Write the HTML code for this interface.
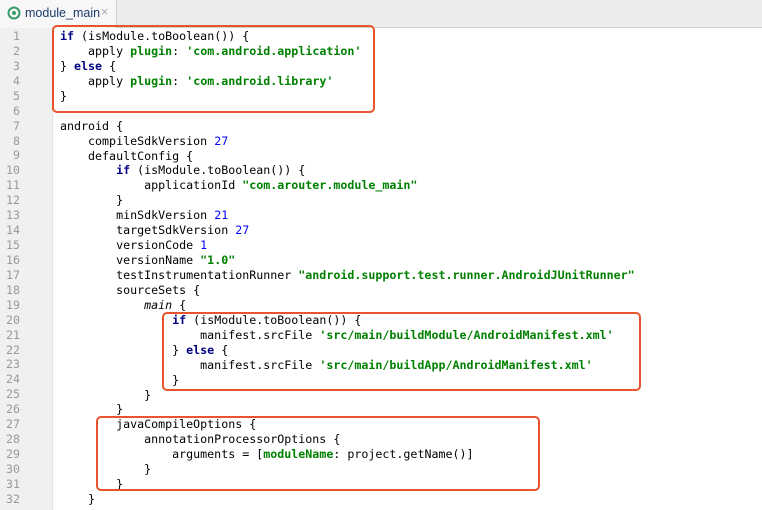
<!DOCTYPE html>
<html><head><style>
body{margin:0;width:762px;height:510px;background:#fff;overflow:hidden;position:relative;font-family:"DejaVu Sans Mono","Liberation Mono",monospace;}
#tabbar{position:absolute;left:0;top:0;width:762px;height:27px;background:#ececec;border-bottom:1px solid #d0d0d0;}
#tab{position:absolute;left:0;top:0;width:116px;height:28px;background:#f7f7f7;border-right:1px solid #ccc;font-family:"Liberation Sans",sans-serif;font-size:12.5px;color:#1a3a6a;}
#gutter{position:absolute;left:0;top:28px;width:52px;height:482px;background:#f0f0f0;border-right:1px solid #e2e2e2;}
.ln{position:absolute;left:0;width:20px;text-align:right;font-size:11.6px;color:#999;line-height:15px;}
.code{position:absolute;left:60px;font-size:11.65px;line-height:14.93px;white-space:pre;color:#000;}
.k{color:#000080;font-weight:bold}
.s{color:#008000;font-weight:bold}
.n{color:#0000ff}
.box{position:absolute;border:2.5px solid #e8542e;border-radius:5px;}
</style></head><body>
<div id="tabbar"><div id="tab">
<svg style="position:absolute;left:7px;top:6px" width="14" height="14"><circle cx="7" cy="7" r="5.5" fill="none" stroke="#3a9c6a" stroke-width="2"/><circle cx="7" cy="7" r="2" fill="#3a9c6a"/></svg>
<span style="position:absolute;left:25px;top:6px">module_main</span>
<span style="position:absolute;left:101px;top:5px;color:#aaa">×</span></div></div>
<div id="gutter"></div>
<div id="lns"></div>
<div class="code" style="top:29px"><span class="k">if</span> (isModule.toBoolean()) {
    apply <span class="s">plugin</span>: <span class="s">'com.android.application'</span>
} <span class="k">else</span> {
    apply <span class="s">plugin</span>: <span class="s">'com.android.library'</span>
}

android {
    compileSdkVersion <span class="n">27</span>
    defaultConfig {
        <span class="k">if</span> (isModule.toBoolean()) {
            applicationId <span class="s">"com.arouter.module_main"</span>
        }
        minSdkVersion <span class="n">21</span>
        targetSdkVersion <span class="n">27</span>
        versionCode <span class="n">1</span>
        versionName <span class="s">"1.0"</span>
        testInstrumentationRunner <span class="s">"android.support.test.runner.AndroidJUnitRunner"</span>
        sourceSets {
            <i>main</i> {
                <span class="k">if</span> (isModule.toBoolean()) {
                    manifest.srcFile <span class="s">'src/main/buildModule/AndroidManifest.xml'</span>
                } <span class="k">else</span> {
                    manifest.srcFile <span class="s">'src/main/buildApp/AndroidManifest.xml'</span>
                }
            }
        }
        javaCompileOptions {
            annotationProcessorOptions {
                arguments = [<span class="s">moduleName</span>: project.getName()]
            }
        }
    }</div>
<div class="box" style="left:52px;top:25px;width:319px;height:84px"></div>
<div class="box" style="left:162px;top:312px;width:475px;height:75px"></div>
<div class="box" style="left:96px;top:416px;width:440px;height:71px"></div>
<script>
var g=document.getElementById('lns'),h='';
for(var i=1;i<=32;i++){h+='<div class="ln" style="top:'+(29+(i-1)*14.93)+'px">'+i+'</div>';}
g.innerHTML=h;
</script>
</body></html>
